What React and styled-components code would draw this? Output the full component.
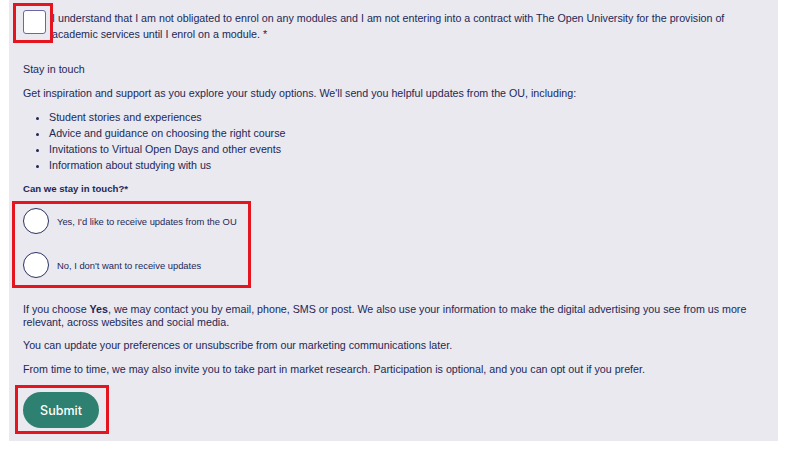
import React from "react";
import styled, { createGlobalStyle } from "styled-components";

const GlobalStyle = createGlobalStyle`
  html, body {
    margin: 0;
    padding: 0;
    background: #ffffff;
  }
  body {
    font-family: "Liberation Sans", Arial, sans-serif;
    color: #1e2856;
  }
`;

const Panel = styled.div`
  margin-left: 9px;
  width: 769px;
  box-sizing: border-box;
  padding: 0 14px 7px;
  background: #e9e9ef;
  font-size: 10.7px;
`;

const Highlight = styled.div`
  border: 3px solid #e4151f;
  box-sizing: border-box;
  width: ${(p) => p.$width}px;
  margin: ${(p) => p.$margin};
  padding: ${(p) => p.$padding};
`;

const ConsentRow = styled.div`
  display: flex;
  align-items: flex-start;
`;

const Checkbox = styled.span`
  display: block;
  width: 23px;
  height: 24px;
  box-sizing: border-box;
  border: 1.5px solid #6c66a8;
  border-radius: 3px;
  background: #ffffff;
`;

const ConsentText = styled.p`
  margin: 10px 0 0 -1px;
  line-height: 16px;
  max-width: 680px;
`;

const Para = styled.p`
  margin: ${(p) => p.$top}px 0 0;
  line-height: ${(p) => p.$lh || 16}px;
`;

const List = styled.ul`
  margin: 8px 0 0;
  padding-left: 26px;
  line-height: 16px;
`;

const Question = styled.p`
  margin: 9px 0 0;
  font-size: 9.6px;
  font-weight: bold;
  line-height: 14px;
`;

const RadioRow = styled.label`
  display: flex;
  align-items: center;
  gap: 8px;
  font-size: 9.4px;
  white-space: nowrap;
  & + & {
    margin-top: 18px;
  }
`;

const Radio = styled.span`
  display: block;
  flex: none;
  width: 26px;
  height: 26px;
  box-sizing: border-box;
  border: 1.5px solid #2c3162;
  border-radius: 50%;
  background: #ffffff;
`;

const SubmitButton = styled.button`
  display: block;
  width: 76px;
  height: 36px;
  border: none;
  border-radius: 18px;
  background: #2e8070;
  color: #ffffff;
  font-family: Inter, "Open Sans", sans-serif;
  font-weight: 500;
  font-size: 12.5px;
  cursor: pointer;
`;

const bullets = [
  "Student stories and experiences",
  "Advice and guidance on choosing the right course",
  "Invitations to Virtual Open Days and other events",
  "Information about studying with us",
];

export default function App() {
  return (
    <>
      <GlobalStyle />
      <Panel>
        <ConsentRow>
          <Highlight $width={40} $margin="3px 0 0 -10px" $padding="4px 4px 6px 7px">
            <Checkbox />
          </Highlight>
          <ConsentText>
            I understand that I am not obligated to enrol on any modules and I am not entering into a
            contract with The Open University for the provision of academic services until I enrol on a
            module. *
          </ConsentText>
        </ConsentRow>

        <Para $top={18}>Stay in touch</Para>
        <Para $top={8}>
          Get inspiration and support as you explore your study options. We'll send you helpful updates
          from the OU, including:
        </Para>
        <List>
          {bullets.map((b) => (
            <li key={b}>{b}</li>
          ))}
        </List>

        <Question>Can we stay in touch?*</Question>
        <Highlight $width={239} $margin="5px 0 0 -11px" $padding="4px 8px 7px 8px">
          <RadioRow>
            <Radio />
            Yes, I'd like to receive updates from the OU
          </RadioRow>
          <RadioRow>
            <Radio />
            No, I don't want to receive updates
          </RadioRow>
        </Highlight>

        <Para $top={15} $lh={12.5}>
          If you choose <b>Yes</b>, we may contact you by email, phone, SMS or post. We also use your
          information to make the digital advertising you see from us more relevant, across websites and
          social media.
        </Para>
        <Para $top={11} $lh={13}>
          You can update your preferences or unsubscribe from our marketing communications later.
        </Para>
        <Para $top={11} $lh={13}>
          From time to time, we may also invite you to take part in market research. Participation is
          optional, and you can opt out if you prefer.
        </Para>

        <Highlight $width={94} $margin="9px 0 0 -8px" $padding="4px 7px 3px 5px">
          <SubmitButton>Submit</SubmitButton>
        </Highlight>
      </Panel>
    </>
  );
}
